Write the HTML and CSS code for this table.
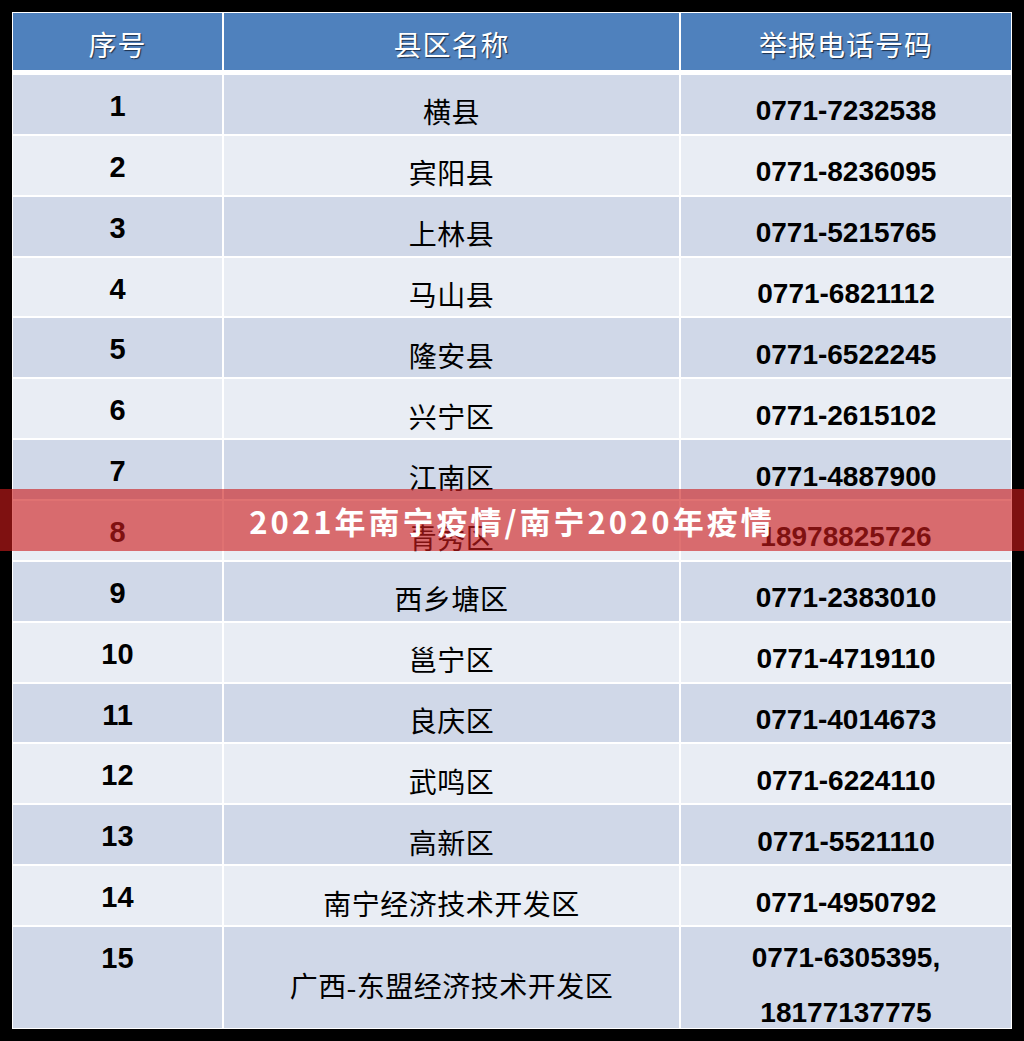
FILE: index.html
```html
<!DOCTYPE html>
<html lang="zh-CN">
<head>
<meta charset="utf-8">
<title>2021年南宁疫情/南宁2020年疫情</title>
<link rel="stylesheet" href="styles.css">
</head>
<body>
<div class="page">
  <div class="sheet">
    <div class="cell head">序号</div>
    <div class="cell head">县区名称</div>
    <div class="cell head">举报电话号码</div>

    <div class="cell num odd">1</div><div class="cell name odd">横县</div><div class="cell tel odd">0771-7232538</div>
    <div class="cell num even">2</div><div class="cell name even">宾阳县</div><div class="cell tel even">0771-8236095</div>
    <div class="cell num odd">3</div><div class="cell name odd">上林县</div><div class="cell tel odd">0771-5215765</div>
    <div class="cell num even">4</div><div class="cell name even">马山县</div><div class="cell tel even">0771-6821112</div>
    <div class="cell num odd">5</div><div class="cell name odd">隆安县</div><div class="cell tel odd">0771-6522245</div>
    <div class="cell num even">6</div><div class="cell name even">兴宁区</div><div class="cell tel even">0771-2615102</div>
    <div class="cell num odd">7</div><div class="cell name odd">江南区</div><div class="cell tel odd">0771-4887900</div>
    <div class="cell num even">8</div><div class="cell name even">青秀区</div><div class="cell tel even">18978825726</div>
    <div class="cell num odd">9</div><div class="cell name odd">西乡塘区</div><div class="cell tel odd">0771-2383010</div>
    <div class="cell num even">10</div><div class="cell name even">邕宁区</div><div class="cell tel even">0771-4719110</div>
    <div class="cell num odd">11</div><div class="cell name odd">良庆区</div><div class="cell tel odd">0771-4014673</div>
    <div class="cell num even">12</div><div class="cell name even">武鸣区</div><div class="cell tel even">0771-6224110</div>
    <div class="cell num odd">13</div><div class="cell name odd">高新区</div><div class="cell tel odd">0771-5521110</div>
    <div class="cell num even">14</div><div class="cell name even">南宁经济技术开发区</div><div class="cell tel even">0771-4950792</div>
    <div class="cell num odd">15</div><div class="cell name odd">广西-东盟经济技术开发区</div><div class="cell tel odd multi">0771-6305395,<br>18177137775</div>
  </div>
  <div class="banner">2021年南宁疫情/南宁2020年疫情</div>
</div>
</body>
</html>
```

FILE: styles.css
```css
html, body {
  margin: 0;
  padding: 0;
  background: #000;
}

.page {
  position: relative;
  width: 1024px;
  height: 1041px;
  padding: 12px;
  box-sizing: border-box;
}

.sheet {
  display: grid;
  grid-template-columns: 209px 455px 1fr;
  grid-template-rows: 60px repeat(14, 58.86px) 1fr;
  gap: 2px;
  width: 1000px;
  height: 1017px;
  box-sizing: border-box;
  border: 1px solid #fff;
  background: #fff;
}

.cell {
  display: flex;
  justify-content: center;
  align-items: center;
  color: #000;
  box-sizing: border-box;
  overflow: hidden;
}

.head {
  background: #4f81bd;
  border-bottom: 3px solid #fff;
  color: #fff;
  font-family: "Noto Sans CJK SC", sans-serif;
  font-size: 28px;
  letter-spacing: 1px;
  padding-top: 4px;
  text-shadow: 1px 1px 1px #1d2f4a;
}

.odd { background: #d0d8e8; }
.even { background: #e9edf4; }

.num {
  align-items: flex-start;
  padding-top: 15px;
  line-height: 32px;
  font-family: "Liberation Sans", Arial, sans-serif;
  font-weight: bold;
  font-size: 29px;
}

.name {
  padding-top: 14px;
  font-family: "Liberation Serif", "Noto Sans CJK SC", serif;
  font-size: 28px;
  letter-spacing: 0.5px;
}

.tel {
  padding-top: 14px;
  font-family: "Liberation Sans", Arial, sans-serif;
  font-weight: bold;
  font-size: 28px;
  text-align: center;
}

.tel.multi {
  line-height: 55px;
}

.banner {
  position: absolute;
  left: 0;
  right: 0;
  top: 489px;
  height: 62px;
  display: flex;
  align-items: center;
  justify-content: center;
  background: rgba(205, 28, 28, 0.62);
  color: #fff;
  font-family: "Noto Sans CJK SC", sans-serif;
  font-weight: bold;
  font-size: 31px;
  letter-spacing: 3px;
}
```
